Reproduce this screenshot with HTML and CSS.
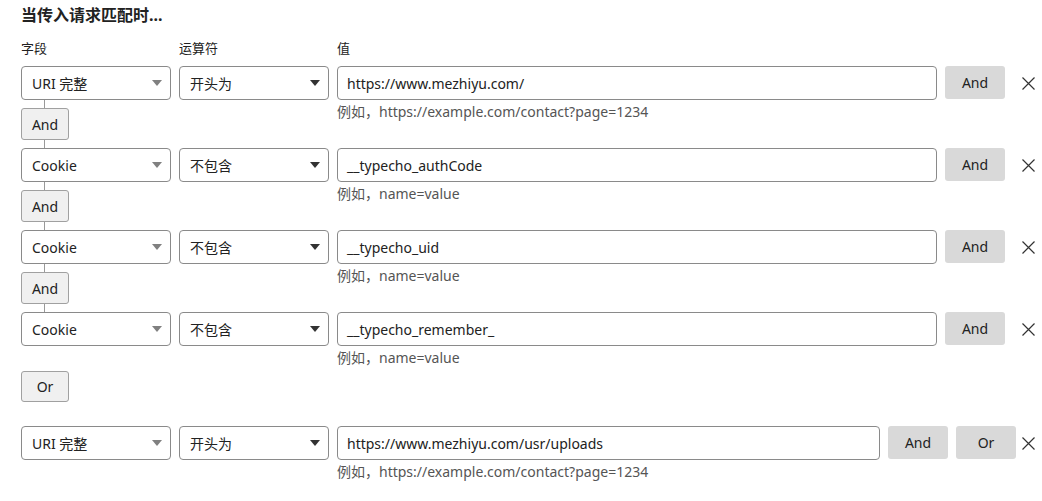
FILE: index.html
```html
<!DOCTYPE html>
<html lang="zh-CN">
<head>
<meta charset="utf-8">
<title>规则</title>
<link rel="stylesheet" href="styles.css">
</head>
<body>
<div class="rule">
  <h3 class="title">当传入请求匹配时...</h3>
  <div class="labels">
    <span>字段</span><span>运算符</span><span>值</span>
  </div>

  <div class="cond">
    <div class="select"><span>URI 完整</span><svg class="arrow light" width="10" height="6" viewBox="0 0 10 6"><path d="M0 0h10L5 6z"/></svg></div>
    <div class="select"><span>开头为</span><svg class="arrow" width="10" height="6" viewBox="0 0 10 6"><path d="M0 0h10L5 6z"/></svg></div>
    <div class="input">https://www.mezhiyu.com/</div>
    <div class="actions"><button class="act">And</button></div>
    <button class="close"><svg width="13" height="13" viewBox="0 0 13 13"><path d="M0.5 0.5l12 12M12.5 0.5l-12 12"/></svg></button>
    <div class="connector"><button class="link">And</button></div>
    <div class="hint">例如，https://example.com/contact?page=1234</div>
  </div>

  <div class="cond">
    <div class="select"><span>Cookie</span><svg class="arrow light" width="10" height="6" viewBox="0 0 10 6"><path d="M0 0h10L5 6z"/></svg></div>
    <div class="select"><span>不包含</span><svg class="arrow" width="10" height="6" viewBox="0 0 10 6"><path d="M0 0h10L5 6z"/></svg></div>
    <div class="input">__typecho_authCode</div>
    <div class="actions"><button class="act">And</button></div>
    <button class="close"><svg width="13" height="13" viewBox="0 0 13 13"><path d="M0.5 0.5l12 12M12.5 0.5l-12 12"/></svg></button>
    <div class="connector"><button class="link">And</button></div>
    <div class="hint">例如，name=value</div>
  </div>

  <div class="cond">
    <div class="select"><span>Cookie</span><svg class="arrow light" width="10" height="6" viewBox="0 0 10 6"><path d="M0 0h10L5 6z"/></svg></div>
    <div class="select"><span>不包含</span><svg class="arrow" width="10" height="6" viewBox="0 0 10 6"><path d="M0 0h10L5 6z"/></svg></div>
    <div class="input">__typecho_uid</div>
    <div class="actions"><button class="act">And</button></div>
    <button class="close"><svg width="13" height="13" viewBox="0 0 13 13"><path d="M0.5 0.5l12 12M12.5 0.5l-12 12"/></svg></button>
    <div class="connector"><button class="link">And</button></div>
    <div class="hint">例如，name=value</div>
  </div>

  <div class="cond">
    <div class="select"><span>Cookie</span><svg class="arrow light" width="10" height="6" viewBox="0 0 10 6"><path d="M0 0h10L5 6z"/></svg></div>
    <div class="select"><span>不包含</span><svg class="arrow" width="10" height="6" viewBox="0 0 10 6"><path d="M0 0h10L5 6z"/></svg></div>
    <div class="input">__typecho_remember_</div>
    <div class="actions"><button class="act">And</button></div>
    <button class="close"><svg width="13" height="13" viewBox="0 0 13 13"><path d="M0.5 0.5l12 12M12.5 0.5l-12 12"/></svg></button>
    <div class="hint">例如，name=value</div>
  </div>

  <div class="or-sep"><button class="link">Or</button></div>

  <div class="cond cond-double">
    <div class="select"><span>URI 完整</span><svg class="arrow light" width="10" height="6" viewBox="0 0 10 6"><path d="M0 0h10L5 6z"/></svg></div>
    <div class="select"><span>开头为</span><svg class="arrow" width="10" height="6" viewBox="0 0 10 6"><path d="M0 0h10L5 6z"/></svg></div>
    <div class="input">https://www.mezhiyu.com/usr/uploads</div>
    <div class="actions"><button class="act">And</button><button class="act">Or</button></div>
    <button class="close"><svg width="13" height="13" viewBox="0 0 13 13"><path d="M0.5 0.5l12 12M12.5 0.5l-12 12"/></svg></button>
    <div class="hint">例如，https://example.com/contact?page=1234</div>
  </div>
</div>
</body>
</html>
```

FILE: styles.css
```css
* { box-sizing: border-box; }

html, body {
  margin: 0;
  background: #fff;
}

body {
  font-family: "Noto Sans", "Noto Sans CJK SC", sans-serif;
  font-size: 14px;
  color: #222;
}

.rule {
  padding: 4px 0 0 21px;
  width: 1042px;
}

.title {
  margin: 0;
  font-size: 16px;
  line-height: 22px;
  font-weight: 700;
  color: #222;
}

.labels {
  display: grid;
  grid-template-columns: 150px 150px 1fr;
  column-gap: 8px;
  margin-top: 13px;
  margin-bottom: 9px;
  font-size: 13px;
  line-height: 18px;
  color: #222;
}

.cond {
  display: grid;
  grid-template-columns: 150px 150px 1fr auto 29px;
  grid-template-rows: 34px auto;
  column-gap: 8px;
}

.cond-double {
  grid-template-columns: 150px 150px 1fr auto 18px;
}

.select {
  grid-row: 1;
  display: flex;
  align-items: center;
  justify-content: space-between;
  height: 34px;
  padding: 0 8px 0 10px;
  border: 1px solid #8a8a8a;
  border-radius: 4px;
  background: #fff;
  white-space: nowrap;
}

.arrow { fill: #333; flex: none; }
.arrow.light { fill: #808080; }

.input {
  grid-row: 1;
  grid-column: 3;
  display: flex;
  align-items: center;
  height: 34px;
  padding: 0 9px;
  border: 1px solid #8a8a8a;
  border-radius: 4px;
  background: #fff;
  white-space: nowrap;
  overflow: hidden;
}

.actions {
  grid-row: 1;
  grid-column: 4;
  display: flex;
  gap: 8px;
  align-items: flex-start;
}

button {
  font-family: inherit;
  font-size: 14px;
  color: #222;
  cursor: pointer;
}

.act {
  width: 60px;
  height: 33px;
  padding: 0;
  border: none;
  border-radius: 3px;
  background: #d9d9d9;
}

.close {
  grid-row: 1;
  grid-column: 5;
  justify-self: end;
  align-self: center;
  margin-right: 7px;
  padding: 0;
  width: 13px;
  height: 13px;
  border: none;
  background: none;
  display: flex;
}

.close svg path {
  stroke: #333;
  stroke-width: 1.2;
  fill: none;
}

.connector {
  grid-row: 2;
  grid-column: 1;
  position: relative;
  width: 48px;
  padding: 8px 0;
}

.connector::before {
  content: "";
  position: absolute;
  left: 23px;
  top: 0;
  bottom: 0;
  width: 1px;
  background: #999;
}

.link {
  position: relative;
  display: block;
  width: 48px;
  height: 32px;
  padding: 0;
  border: 1px solid #a0a0a0;
  border-radius: 3px;
  background: #f0f0f0;
}

.hint {
  grid-row: 2;
  grid-column: 3 / span 3;
  margin-top: 2px;
  line-height: 20px;
  color: #555;
  align-self: start;
  white-space: nowrap;
}

.or-sep {
  padding: 3px 0 24px;
}

.or-sep .link {
  height: 31px;
}
```
